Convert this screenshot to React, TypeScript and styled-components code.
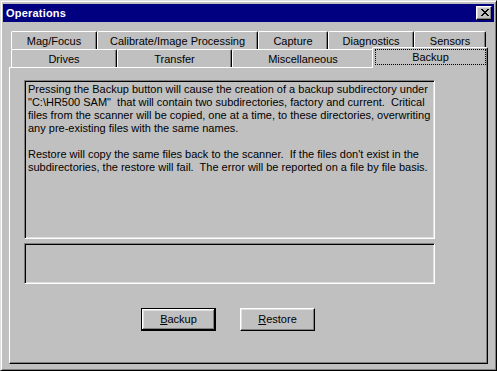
import React from "react";
import styled, { createGlobalStyle, css } from "styled-components";

const Face = "#c0c0c0";
const Light = "#dfdfdf";
const Shadow = "#808080";

const GlobalStyle = createGlobalStyle`
  html, body {
    margin: 0;
    padding: 0;
    background: ${Face};
  }
  body {
    font-family: "Liberation Sans", Arial, sans-serif;
    font-size: 11px;
    color: #000;
  }
`;

const Window = styled.div`
  box-sizing: border-box;
  width: 497px;
  height: 371px;
  padding: 3px 2px 2px 2px;
  background: ${Face};
  border: 1px solid;
  border-color: ${Light} #000 #000 ${Light};
  box-shadow: inset 1px 1px #fff, inset -1px -1px ${Shadow};
  display: flex;
  flex-direction: column;
`;

const TitleBar = styled.div`
  height: 18px;
  flex: none;
  padding: 0 2px 0 3px;
  background: #000080;
  color: #fff;
  display: flex;
  align-items: center;
  justify-content: space-between;
`;

const Title = styled.span`
  font-weight: bold;
  font-size: 11px;
  letter-spacing: 0.2px;
`;

const CloseButton = styled.div`
  box-sizing: border-box;
  width: 16px;
  height: 14px;
  background: ${Face};
  border: 1px solid;
  border-color: #fff #000 #000 #fff;
  box-shadow: inset -1px -1px ${Shadow}, inset 1px 1px ${Light};
  display: flex;
  align-items: center;
  justify-content: center;
  padding: 0 0 1px 1px;
`;

const Body = styled.div`
  flex: 1;
  display: flex;
  flex-direction: column;
  padding: 9px 6px 4px 6px;
`;

const TabStrip = styled.div`
  display: flex;
  flex-direction: column;
  padding: 0 2px;
`;

const TabRow = styled.div`
  display: flex;
  height: 18px;
`;

const Tab = styled.div<{ $w: number; $active?: boolean }>`
  box-sizing: border-box;
  flex: none;
  width: ${(p) => p.$w}px;
  height: 18px;
  padding-top: 1px;
  background: ${Face};
  border-top: 1px solid #fff;
  border-left: 1px solid #fff;
  border-right: 1px solid #000;
  border-radius: 2px 2px 0 0;
  box-shadow: inset -1px 0 ${Shadow};
  display: flex;
  align-items: center;
  justify-content: center;
  white-space: nowrap;
  ${(p) =>
    p.$active &&
    css`
      position: relative;
      z-index: 1;
      width: ${p.$w + 4}px;
      height: 21px;
      margin: -2px -2px -1px -2px;
      padding: 1px 1px 3px 2px;
    `}
`;

const FocusRing = styled.span`
  box-sizing: border-box;
  flex: 1;
  align-self: stretch;
  border: 1px dotted #000;
  display: flex;
  align-items: center;
  justify-content: center;
`;

const Panel = styled.div`
  flex: 1;
  background: ${Face};
  border: 1px solid;
  border-color: #fff #000 #000 #fff;
  box-shadow: inset -1px -1px ${Shadow};
  padding: 12px 0 0 14px;
  display: flex;
  flex-direction: column;
`;

const Sunken = styled.div<{ $h: number }>`
  box-sizing: border-box;
  width: 411px;
  height: ${(p) => p.$h}px;
  border: 1px solid;
  border-color: ${Shadow} #fff #fff ${Shadow};
  box-shadow: inset 1px 1px #000, inset -1px -1px ${Light};
`;

const MessageBox = styled(Sunken)`
  padding: 2px 3px;
  line-height: 13px;
`;

const StatusBox = styled(Sunken)`
  margin-top: 4px;
`;

const Line = styled.div`
  white-space: pre;
  height: 13px;
`;

const ButtonRow = styled.div`
  width: 411px;
  display: flex;
  justify-content: center;
  gap: 24px;
  margin-top: 24px;
  padding-right: 3px;
  box-sizing: border-box;
`;

const Button = styled.div<{ $default?: boolean }>`
  box-sizing: border-box;
  width: 75px;
  height: 23px;
  background: ${Face};
  display: flex;
  align-items: center;
  justify-content: center;
  padding-bottom: 1px;
  border: 1px solid;
  ${(p) =>
    p.$default
      ? css`
          border-color: #000;
          box-shadow: inset -1px -1px #000, inset 1px 1px #fff,
            inset -2px -2px ${Shadow}, inset 2px 2px ${Light};
        `
      : css`
          border-color: #fff #000 #000 #fff;
          box-shadow: inset -1px -1px ${Shadow}, inset 1px 1px ${Light};
        `}
`;

const topTabs = [
  { label: "Mag/Focus", w: 86 },
  { label: "Calibrate/Image Processing", w: 161 },
  { label: "Capture", w: 70 },
  { label: "Diagnostics", w: 86 },
  { label: "Sensors", w: 72 },
];

const bottomTabs = [
  { label: "Drives", w: 106 },
  { label: "Transfer", w: 115 },
  { label: "Miscellaneous", w: 142 },
  { label: "Backup", w: 112, active: true },
];

const message = [
  "Pressing the Backup button will cause the creation of a backup subdirectory under",
  "\"C:\\HR500 SAM\"  that will contain two subdirectories, factory and current.  Critical",
  "files from the scanner will be copied, one at a time, to these directories, overwriting",
  "any pre-existing files with the same names.",
  "",
  "Restore will copy the same files back to the scanner.  If the files don't exist in the",
  "subdirectories, the restore will fail.  The error will be reported on a file by file basis.",
];

function CloseGlyph() {
  return (
    <svg width="8" height="7" viewBox="0 0 8 7" shapeRendering="crispEdges">
      <path
        fill="#000"
        d="M0 0h2v1H0zM6 0h2v1H6zM1 1h2v1H1zM5 1h2v1H5zM2 2h4v1H2zM3 3h2v1H3zM2 4h4v1H2zM1 5h2v1H1zM5 5h2v1H5zM0 6h2v1H0zM6 6h2v1H6z"
      />
    </svg>
  );
}

export default function App() {
  return (
    <>
      <GlobalStyle />
      <Window>
        <TitleBar>
          <Title>Operations</Title>
          <CloseButton>
            <CloseGlyph />
          </CloseButton>
        </TitleBar>
        <Body>
          <TabStrip>
            <TabRow>
              {topTabs.map((t) => (
                <Tab key={t.label} $w={t.w}>
                  {t.label}
                </Tab>
              ))}
            </TabRow>
            <TabRow>
              {bottomTabs.map((t) => (
                <Tab key={t.label} $w={t.w} $active={t.active}>
                  {t.active ? <FocusRing>{t.label}</FocusRing> : t.label}
                </Tab>
              ))}
            </TabRow>
          </TabStrip>
          <Panel>
            <MessageBox $h={159}>
              {message.map((line, i) => (
                <Line key={i}>{line}</Line>
              ))}
            </MessageBox>
            <StatusBox $h={41} />
            <ButtonRow>
              <Button $default>
                <span>
                  <u>B</u>ackup
                </span>
              </Button>
              <Button>
                <span>
                  <u>R</u>estore
                </span>
              </Button>
            </ButtonRow>
          </Panel>
        </Body>
      </Window>
    </>
  );
}
